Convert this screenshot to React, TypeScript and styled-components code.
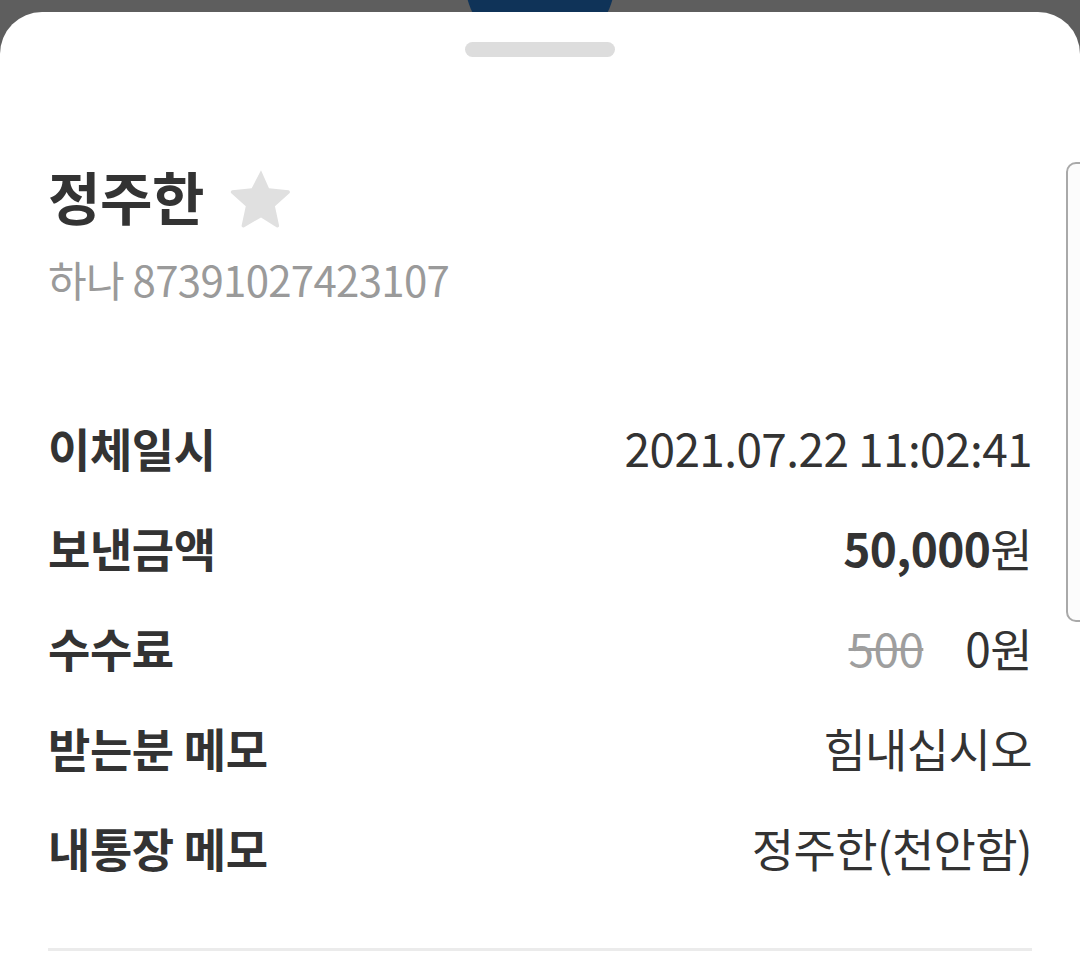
import React from "react";
import styled, { createGlobalStyle } from "styled-components";

const Global = createGlobalStyle`
  html, body { margin: 0; padding: 0; background: #5e5e5e; }
  body { font-family: "Noto Sans CJK KR", "Noto Sans", sans-serif; }
  * { box-sizing: border-box; }
`;

const Screen = styled.div`
  position: relative;
  width: 1080px;
  height: 959px;
  overflow: hidden;
  background: #5e5e5e;
  display: flex;
  flex-direction: column;
`;

const Backdrop = styled.div`
  height: 12px;
  display: flex;
  justify-content: center;
  overflow: visible;
`;

const Fab = styled.div`
  width: 150px;
  height: 150px;
  flex: none;
  margin-top: -95px;
  border-radius: 50%;
  background: #0f3358;
`;

const Sheet = styled.div`
  position: relative;
  z-index: 1;
  flex: 1;
  background: #ffffff;
  border-radius: 42px 42px 0 0;
  padding: 30px 48px 0;
  display: flex;
  flex-direction: column;
`;

const Handle = styled.div`
  align-self: center;
  width: 150px;
  height: 15px;
  border-radius: 8px;
  background: #dddddd;
`;

const Header = styled.div`
  margin-top: 106px;
  display: flex;
  flex-direction: column;
`;

const TitleRow = styled.div`
  display: flex;
  align-items: center;
  gap: 26px;
  height: 64px;
`;

const Name = styled.h1`
  margin: 0;
  font-size: 57px;
  line-height: 64px;
  font-weight: 700;
  color: #333333;
  letter-spacing: -0.5px;
`;

const StarBox = styled.span`
  display: flex;
  margin-top: 6px;
`;

const Account = styled.div`
  margin-top: 27px;
  font-size: 42px;
  line-height: 50px;
  color: #9a9a9a;
  letter-spacing: -0.7px;
`;

const Rows = styled.div`
  margin-top: 93px;
  display: flex;
  flex-direction: column;
`;

const Row = styled.div`
  height: 100px;
  display: flex;
  align-items: center;
  justify-content: space-between;
`;

const Label = styled.div`
  font-size: 46px;
  font-weight: 700;
  color: #333333;
  letter-spacing: -0.4px;
`;

const Value = styled.div`
  display: flex;
  align-items: baseline;
  gap: 42px;
  font-size: 46px;
  color: #333333;
  letter-spacing: -0.6px;
`;

const Strong = styled.span`
  font-weight: 700;
`;

const Struck = styled.span`
  color: #9e9e9e;
  text-decoration: line-through;
  text-decoration-thickness: 3px;
`;

const Divider = styled.div`
  margin-top: 51px;
  height: 3px;
  background: #ebebeb;
`;

const EdgeTab = styled.div`
  position: absolute;
  right: -14px;
  top: 150px;
  width: 28px;
  height: 460px;
  border: 2px solid #a9a9a9;
  border-radius: 10px;
  background: #fcfcfc;
`;

const Star = () => (
  <svg width="62" height="60" viewBox="0 0 24 23" aria-hidden>
    <path
      d="M12 0.8l3.1 6.9 7.5 0.8c0.6 0.1 0.8 0.8 0.4 1.2l-5.6 5 1.6 7.4c0.1 0.6-0.5 1-1 0.7L12 19l-6.5 3.8c-0.5 0.3-1.1-0.1-1-0.7l1.6-7.4-5.6-5c-0.4-0.4-0.2-1.1 0.4-1.2l7.5-0.8z"
      fill="#e0e0e0"
    />
  </svg>
);

export default function App() {
  return (
    <Screen>
      <Global />
      <Backdrop>
        <Fab />
      </Backdrop>
      <Sheet>
        <EdgeTab />
        <Handle />
        <Header>
          <TitleRow>
            <Name>정주한</Name>
            <StarBox>
              <Star />
            </StarBox>
          </TitleRow>
          <Account>하나 87391027423107</Account>
        </Header>
        <Rows>
          <Row>
            <Label>이체일시</Label>
            <Value>2021.07.22 11:02:41</Value>
          </Row>
          <Row>
            <Label>보낸금액</Label>
            <Value>
              <span>
                <Strong>50,000</Strong>원
              </span>
            </Value>
          </Row>
          <Row>
            <Label>수수료</Label>
            <Value>
              <Struck>500</Struck>
              <span>0원</span>
            </Value>
          </Row>
          <Row>
            <Label>받는분 메모</Label>
            <Value>힘내십시오</Value>
          </Row>
          <Row>
            <Label>내통장 메모</Label>
            <Value>정주한(천안함)</Value>
          </Row>
        </Rows>
        <Divider />
      </Sheet>
    </Screen>
  );
}
